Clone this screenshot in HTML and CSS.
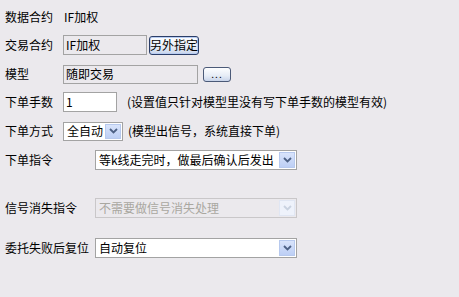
FILE: index.html
```html
<!DOCTYPE html>
<html lang="zh-CN">
<head>
<meta charset="utf-8">
<link rel="stylesheet" href="styles.css">
</head>
<body>
<div class="form">
  <div class="row r1">
    <span class="label">数据合约</span>
    <span class="value">IF加权</span>
  </div>
  <div class="row r2">
    <span class="label">交易合约</span>
    <div class="box box-ro w-contract">IF加权</div>
    <button class="btn btn-assign">另外指定</button>
  </div>
  <div class="row r3">
    <span class="label">模型</span>
    <div class="box box-ro w-model">随即交易</div>
    <button class="btn btn-dots">...</button>
  </div>
  <div class="row r4">
    <span class="label">下单手数</span>
    <div class="box w-qty">1</div>
    <span class="hint hint-qty">(设置值只针对模型里没有写下单手数的模型有效)</span>
  </div>
  <div class="row r5">
    <span class="label">下单方式</span>
    <div class="select w-mode">
      <span class="sel-text">全自动</span>
      <span class="arrow"><svg width="9" height="6" viewBox="0 0 9 6"><path d="M1 1 L4.5 4.5 L8 1" fill="none" stroke="#4d6185" stroke-width="1.8"/></svg></span>
    </div>
    <span class="hint hint-mode">(模型出信号，系统直接下单)</span>
  </div>
  <div class="row r6">
    <span class="label label-wide">下单指令</span>
    <div class="select w-wide">
      <span class="sel-text">等k线走完时，做最后确认后发出</span>
      <span class="arrow"><svg width="9" height="6" viewBox="0 0 9 6"><path d="M1 1 L4.5 4.5 L8 1" fill="none" stroke="#4d6185" stroke-width="1.8"/></svg></span>
    </div>
  </div>
  <div class="row r7">
    <span class="label label-wide">信号消失指令</span>
    <div class="select select-disabled w-wide">
      <span class="sel-text">不需要做信号消失处理</span>
      <span class="arrow arrow-disabled"><svg width="9" height="6" viewBox="0 0 9 6"><path d="M1 1 L4.5 4.5 L8 1" fill="none" stroke="#c9d2e0" stroke-width="1.8"/></svg></span>
    </div>
  </div>
  <div class="row r8">
    <span class="label label-wide">委托失败后复位</span>
    <div class="select w-wide">
      <span class="sel-text">自动复位</span>
      <span class="arrow"><svg width="9" height="6" viewBox="0 0 9 6"><path d="M1 1 L4.5 4.5 L8 1" fill="none" stroke="#4d6185" stroke-width="1.8"/></svg></span>
    </div>
  </div>
</div>
</body>
</html>
```

FILE: styles.css
```css
* { box-sizing: border-box; }
html, body {
  margin: 0;
  padding: 0;
  background: #ebe9ed;
  width: 459px;
  height: 297px;
  overflow: hidden;
}
body {
  font-family: "Noto Sans CJK SC", "Noto Sans", sans-serif;
  font-size: 12px;
  color: #000;
  line-height: 16px;
}
.form {
  display: flex;
  flex-direction: column;
  padding: 7px 0 0 5px;
}
.row {
  display: flex;
  align-items: center;
  height: 20px;
}
.r2 { margin-top: 8px; }
.r3 { margin-top: 9px; }
.r4 { margin-top: 8px; }
.r5 { margin-top: 9px; }
.r6 { margin-top: 9px; }
.r7 { margin-top: 28px; }
.r8 { margin-top: 20px; }

.label {
  width: 58px;
  flex: none;
  white-space: nowrap;
}
.label-wide { width: 90px; }
.value { padding-left: 1px; }

.box {
  height: 20px;
  border: 1px solid #a3a3a3;
  background: #fff;
  padding: 0 2px;
  display: flex;
  align-items: center;
  white-space: nowrap;
}
.box-ro { background: #ebe9ed; }
.w-contract { width: 84px; }
.w-model { width: 135px; height: 19px; }
.w-qty { width: 54px; }

.btn {
  font: inherit;
  line-height: 16px;
  color: #000;
  margin: 0;
  padding: 0;
  border: 1px solid #2b3e68;
  border-radius: 3px;
  background: linear-gradient(#fdfeff, #e6ecf6 60%, #c8d4ea);
  display: flex;
  align-items: center;
  justify-content: center;
  white-space: nowrap;
  flex: none;
}
.btn-assign {
  margin-left: 2px;
  width: 50px;
  height: 19px;
  box-shadow: inset 0 0 0 1px #b9cdf2;
}
.btn-dots {
  margin-left: 5px;
  width: 28px;
  height: 15px;
  align-items: flex-end;
  font-size: 10px;
  line-height: 10px;
  letter-spacing: 1px;
  padding-bottom: 2px;
  border-color: #4b5a78;
}

.hint { white-space: nowrap; }
.hint-qty { margin-left: 10px; }
.hint-mode { margin-left: 5px; }

.select {
  height: 20px;
  border: 1px solid #a3a3a3;
  background: #fff;
  display: flex;
  align-items: center;
  padding: 1px;
  flex: none;
}
.w-mode { width: 60px; height: 19px; }
.w-wide { width: 202px; }
.sel-text {
  flex: 1;
  padding-left: 2px;
  white-space: nowrap;
}
.arrow {
  flex: none;
  width: 16px;
  height: 100%;
  background: linear-gradient(#d9e4fb, #bdcff5);
  border: 1px solid #b7c9ee;
  display: flex;
  align-items: center;
  justify-content: center;
}
.select-disabled {
  background: #ebe9ed;
  border-color: #c9c7c9;
  color: #a9a7a0;
}
.arrow-disabled {
  background: #eef2fb;
  border-color: #e0e6f3;
}
```
